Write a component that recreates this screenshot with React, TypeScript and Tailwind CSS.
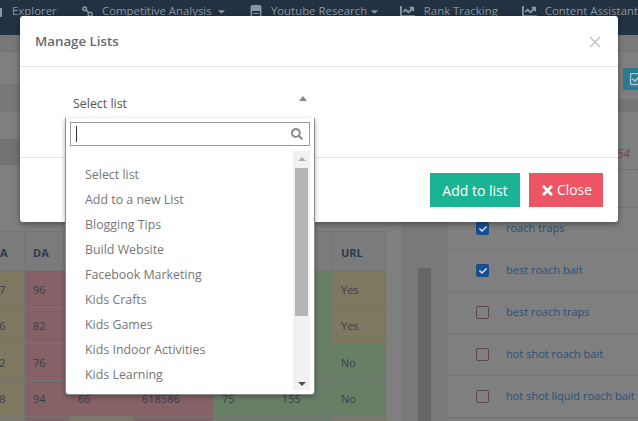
import { FaSearch, FaTimes, FaCheck, FaCaretDown, FaChartLine, FaRegCheckSquare } from 'react-icons/fa';
import { X } from 'lucide-react';

const font = 'font-["Open_Sans",sans-serif]';

const red = 'bg-[#866166]';
const yellow = 'bg-[#7f7860]';
const green = 'bg-[#677f65]';

const rows = [
  { id: 'r1', a: '37', da: '96', c: '', d: '', e: '', f: '', url: 'Yes', colors: [yellow, red, red, red, green, green, yellow] },
  { id: 'r2', a: '26', da: '82', c: '', d: '', e: '', f: '', url: 'Yes', colors: [yellow, red, red, red, green, green, yellow] },
  { id: 'r3', a: '32', da: '76', c: '', d: '', e: '', f: '', url: 'No', colors: [yellow, red, red, red, green, green, green] },
  { id: 'r4', a: '38', da: '94', c: '66', d: '618586', e: '75', f: '155', url: 'No', colors: [yellow, red, red, red, green, green, green] },
  { id: 'r5', a: '', da: '', c: '', d: '', e: '', f: '', url: '', colors: [yellow, red, yellow, red, green, green, yellow] },
];

const keywords = [
  { label: 'roach traps', checked: true },
  { label: 'best roach bait', checked: true },
  { label: 'best roach traps', checked: false },
  { label: 'hot shot roach bait', checked: false },
  { label: 'hot shot liquid roach bait', checked: false },
];

const lists = [
  'Select list',
  'Add to a new List',
  'Blogging Tips',
  'Build Website',
  'Facebook Marketing',
  'Kids Crafts',
  'Kids Games',
  'Kids Indoor Activities',
  'Kids Learning',
];

function LinksIcon() {
  return (
    <svg viewBox="0 0 12 12" className="mr-[9px] h-[11px] w-[11px] shrink-0" fill="none" stroke="currentColor" strokeWidth="1.6">
      <circle cx="3" cy="3" r="2" />
      <circle cx="9" cy="9" r="2.2" />
      <path d="M4.5 4.5 7.5 7.5" strokeWidth="2" />
    </svg>
  );
}

function TubeIcon() {
  return (
    <svg viewBox="0 0 12 13" className="mr-[9px] h-[13px] w-[12px] shrink-0" fill="currentColor">
      <rect x="0.5" y="0" width="11" height="13" rx="2.5" />
      <rect x="2" y="6" width="8" height="5" rx="1" fill="#233242" />
      <rect x="3" y="8" width="6" height="1" />
    </svg>
  );
}

function Nav() {
  return (
    <nav className="flex h-[35px] shrink-0 items-start bg-[#233242] pt-[2px] text-[11.4px] leading-[18px] text-[#8a96a3]">
      <span className="mt-[6px] h-[9px] w-[2px] bg-[#8a96a3]" />
      <span className="ml-[10px] w-[70px]">Explorer</span>
      <span className="flex w-[168px] items-center">
        <LinksIcon />
        Competitive Analysis
        <FaCaretDown className="ml-[4px] text-[11px]" />
      </span>
      <span className="flex w-[150px] items-center">
        <TubeIcon />
        Youtube Research
        <FaCaretDown className="ml-[2px] text-[11px]" />
      </span>
      <span className="flex w-[122px] items-center">
        <FaChartLine className="mr-[9px] text-[15px]" />
        Rank Tracking
      </span>
      <span className="flex items-center whitespace-nowrap">
        <FaChartLine className="mr-[8px] text-[15px]" />
        Content Assistant
      </span>
    </nav>
  );
}

function LeftColumn() {
  return (
    <div className="w-[386px] shrink-0 overflow-hidden">
      <div className="h-[17px] border-b border-[#717171] bg-[#777777]" />
      <div className="h-[32px]" />
      <div className="h-[28px] bg-[#777777]" />
      <div className="h-[27px]" />
      <div className="h-[26px] bg-[#737373]" />
      <div className="h-[66px]" />
      <div className="ml-[-20px] grid w-[406px] grid-cols-[45px_45px_64px_80px_60px_59px_53px] text-[11px] text-[#3a3f46]">
        {['PA', 'DA', '', '', '', '', 'URL'].map((h, i) => (
          <div key={i} className={`flex h-[39px] items-center border-r border-t border-[#747474] bg-[#7b7b7b] pt-[4px] font-bold text-[#2b3a4c] ${i === 0 ? 'pl-[13px]' : 'pl-[8px]'}`}>
            {h}
          </div>
        ))}
        {rows.map((row) =>
          [row.a, row.da, row.c, row.d, row.e, row.f, row.url].map((v, i) => (
            <div
              key={row.id + i}
              className={`flex h-[36.5px] items-center border-r border-t border-[#747474] pt-[2px] ${row.colors[i]} ${i === 0 ? 'pl-[13px]' : 'pl-[8px]'}`}
            >
              {v}
            </div>
          ))
        )}
      </div>
    </div>
  );
}

function MiddleScroll() {
  return (
    <div className="ml-[15px] flex w-[47px] shrink-0 justify-center bg-[#797979]">
      <div className="mt-[233px] h-[200px] w-[13px] bg-[#666666]" />
    </div>
  );
}

function RightColumn() {
  return (
    <div className="min-w-0 flex-1 text-[11px]">
      <div className="h-[17px] border-b border-[#717171] bg-[#7a7a7a]" />
      <div className="flex h-[38px] items-end justify-end">
        <div className="flex h-[22px] w-[15px] items-center overflow-hidden bg-[#2a7a92] pl-[6px] text-[14px] text-[#b9c4c8]">
          <FaRegCheckSquare className="shrink-0" />
        </div>
      </div>
      <div className="mt-[9px] h-[13px] bg-[#757575]" />
      <div className="relative h-[58px] border-b border-dashed border-[#6b6b6b]">
        <span className="absolute left-[169px] top-[33px] text-[12px] italic text-[#7c4646]">54</span>
      </div>
      <div className="h-[38px] border-b border-[#747474]" />
      {keywords.map((k) => (
        <div key={k.label} className="flex h-[42px] items-center border-b border-[#747474] pl-[28px]">
          {k.checked ? (
            <span className="flex h-[13px] w-[13px] shrink-0 items-center justify-center rounded-[2px] bg-[#174f8c] text-[8px] text-[#d8dee6]">
              <FaCheck />
            </span>
          ) : (
            <span className="h-[13px] w-[13px] shrink-0 rounded-[2px] border border-[#5c4552]" />
          )}
          <span className="ml-[17px] whitespace-nowrap text-[#28527a]">{k.label}</span>
        </div>
      ))}
    </div>
  );
}

function ListDropdown() {
  return (
    <div className="absolute left-[45px] top-[102px] flex h-[277px] w-[250px] flex-col rounded-b-[4px] border-x border-b border-[#8c8c8c] bg-white p-[4px] shadow-[0_2px_5px_rgba(0,0,0,0.3)]">
      <div className="flex h-[24px] shrink-0 items-center border border-[#999999] pl-[5px] pr-[6px]">
        <span className="h-[16px] w-px bg-[#333333]" />
        <FaSearch className="ml-auto text-[12px] text-[#8a8a8a]" />
      </div>
      <div className="mt-[5px] flex min-h-0 flex-1">
        <ul className="flex-1 pl-[15px] pt-[11px] text-[12.4px] leading-[25px] text-[#777777]">
          {lists.map((item) => (
            <li key={item}>{item}</li>
          ))}
        </ul>
        <div className="flex w-[17px] flex-col items-center bg-[#f1f1f1]">
          <div className="mt-[6px] h-0 w-0 border-x-[4px] border-b-[4px] border-x-transparent border-b-[#b0b0b0]" />
          <div className="mt-[7px] h-[148px] w-[13px] bg-[#b5b5b5]" />
          <div className="mb-[4px] mt-auto h-0 w-0 border-x-[4px] border-t-[4px] border-x-transparent border-t-[#50505f]" />
        </div>
      </div>
    </div>
  );
}

function ManageListsModal() {
  return (
    <div className="absolute left-[20px] top-[16px] h-[206px] w-[598px] rounded-[3px] bg-white shadow-[0_2px_6px_rgba(0,0,0,0.4)]">
      <div className="flex h-[51px] items-center justify-between border-b border-[#e5e5e5] pl-[15px] pr-[14px] pt-[1px]">
        <h4 className="text-[13.3px] font-semibold text-[#676a6c]">Manage Lists</h4>
        <X size={18} strokeWidth={2} className="text-[#c4c4c4]" />
      </div>
      <div className="flex h-[91px] border-b border-[#e5e5e5] pl-[53px] pr-[311px] pt-[28px]">
        <span className="text-[12.4px] leading-[18px] text-[#555555]">Select list</span>
        <span className="ml-auto mt-[1px] h-0 w-0 border-x-[4px] border-b-[5px] border-x-transparent border-b-[#888888]" />
      </div>
      <div className="flex justify-end gap-[9px] pr-[15px] pt-[15px]">
        <button className="h-[34px] w-[90px] bg-[#1ab394] text-[14px] text-white">Add to list</button>
        <button className="flex h-[34px] w-[74px] items-center justify-center gap-[2px] bg-[#ed5565] text-[13.8px] text-white">
          <FaTimes className="text-[15px]" />
          Close
        </button>
      </div>
      <ListDropdown />
    </div>
  );
}

export default function App() {
  return (
    <div className={`relative flex h-[421px] w-[638px] flex-col overflow-hidden bg-[#7f7f7f] ${font}`}>
      <Nav />
      <div className="flex min-h-0 flex-1">
        <LeftColumn />
        <MiddleScroll />
        <RightColumn />
      </div>
      <ManageListsModal />
    </div>
  );
}
